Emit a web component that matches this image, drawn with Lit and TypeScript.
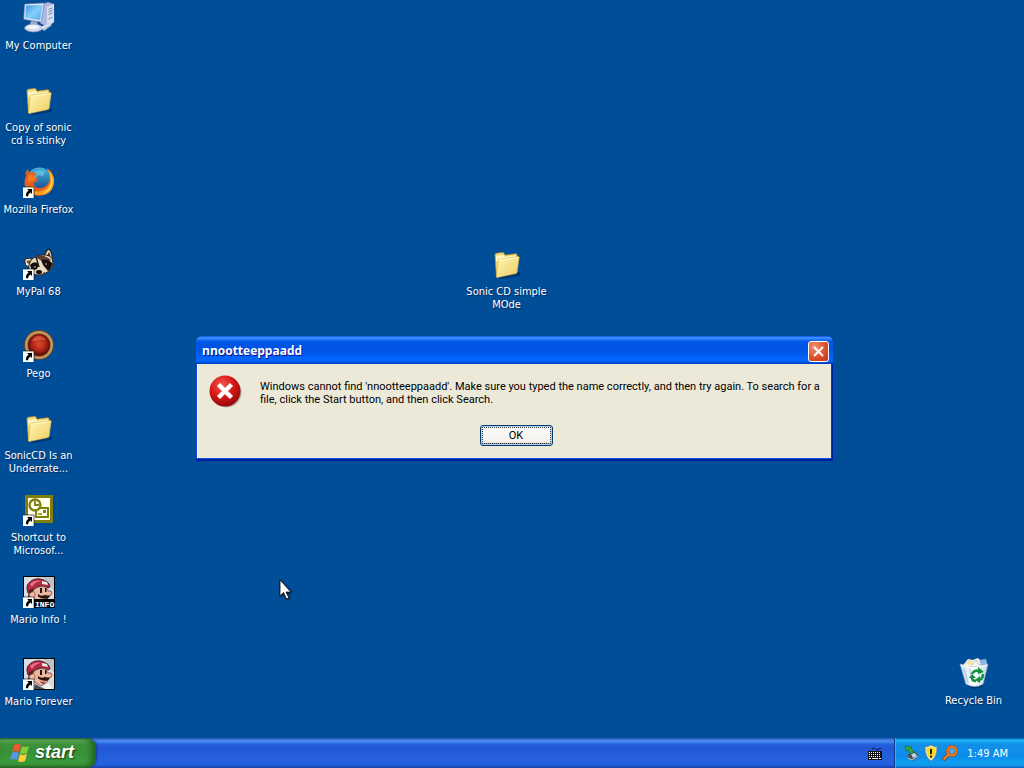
import { LitElement, html, css, svg } from "lit";
import { customElement, property } from "lit/decorators.js";

const folder = svg`
  <path d="M7 29 L28 24 L29 25 L29 28 L9 31z" fill="#00244f" opacity=".55"/>
  <path d="M4 7q0-1.500 1.500-1.700l6-.8q1-.1 1.500.8l1 2 10.500-1.500q1.500-.2 1.500 1.200v17L5.500 29z" fill="#f3d975" stroke="#c29a35" stroke-width=".7"/>
  <path d="M5 8l7.500-1.200 1.500 2L25 7.200v3L5 13z" fill="#fff6bd"/>
  <path d="M7.200 12.400q0-1 1-1.200L27 8.600q1.300-.2 1.200 1L26 24.500q-.1.900-1 1.100L6.500 29.500q-1 .1-1-.8z" fill="url(#fold)" stroke="#d5b04c" stroke-width=".5"/>
  <path d="M8 12.500l19-2.800" stroke="#fffbd8" stroke-width=".8"/>`;

const mario = svg`
  <rect width="32" height="32" fill="#000"/>
  <rect x="1" y="1" width="30" height="30" fill="#d9dce0"/>
  <path d="M20 1h11v14l-6-8z" fill="#bcc3cb"/>
  <path d="M4 13Q3 8 8 5q6-4 13-1 5 2 6 6l-1 2q-8-4-14 0l-3 5H5z" fill="#b52a45" stroke="#3c0d18" stroke-width=".8"/>
  <path d="M7 8q5-5 12-3-7 0-10 6z" fill="#e8738a"/>
  <path d="M19 5l5 1 1 3-6-1z" fill="#f2e8e4"/>
  <path d="M6 14l5-2 1 6-1 7-6-4z" fill="#4b2420"/>
  <path d="M11 13q6-4 12-2l2 4q4-1 4 2t-4 3l-1 4-6 4-8-5q-2-6 1-10z" fill="#eeb69c" stroke="#4a2018" stroke-width=".6"/>
  <path d="M9 16q3-1 3 3t-3 3-3-3 3-3z" fill="#f0bea6" stroke="#70332a" stroke-width=".6"/>
  <path d="M17 12h2v5h-2zM22 12h1.500v4H22z" fill="#161018"/>
  <path d="M15 18q3 3 7 1l5 1-2 2.500q-6 1-10-2z" fill="#2b1511"/>
  <path d="M17 23q3 2 5 0l-1 3-3-1z" fill="#a5303c"/>
  <path d="M12 26q7 4 10 5H11z" fill="#40505c"/>
  <path d="M20 28l6-3 4 6h-8z" fill="#edf1f0"/>`;

const art: Record<string, unknown> = {
  computer: svg`
    <path d="M17 3l8-3 6 2v18l-7 5-7-4z" fill="#aeb9df" stroke="#596a9f" stroke-width=".6"/>
    <path d="M24 5l7-3v18l-7 5z" fill="#d7def2"/>
    <path d="M25.500 7.500l4-1.600M25.500 10l4-1.600M25.500 12.500l4-1.600M25.500 17l4-1.600" stroke="#6475ac" stroke-width=".9"/>
    <path d="M2.500 2L20 1q1 0 1 1l-2.500 17q-.1 1-1 1L1.500 17.500q-1-.1-.8-1L1.500 3q0-1 1-1z" fill="#dce3f4" stroke="#6473ac" stroke-width=".6"/>
    <path d="M3 3.500L19.500 3 17.200 18 2.200 16z" fill="url(#screen)"/>
    <path d="M8 19l6 .8 1 4-8-1z" fill="#a7b2d8"/>
    <ellipse cx="10.500" cy="26" rx="9" ry="4" fill="#d1d8ec" stroke="#7d89b4" stroke-width=".6"/>
    <ellipse cx="10" cy="25" rx="6" ry="2" fill="#f3f5fc"/>
    <path d="M17 25l9-4 3 2-8 6z" fill="#bfc8e3"/>
    <path d="M19 26l7-3.500" stroke="#f7f8fd"/>`,
  folder,
  firefox: svg`
    <circle cx="16.500" cy="15" r="13.500" fill="url(#globe)"/>
    <path d="M11 6q6-3 11 0l-2 4-5-1-3 3z" fill="#72c7e8" opacity=".7"/>
    <path d="M2 8q1-3 3-5l1 4q4-2 8 1l-3 2q0 2 4 3-1 3-5 4 2 6 8 5 6-1 8-6 2-7-2-14 7 5 7 13-1 14-15 15Q3 29 1.500 18q0-6 2-9z" fill="#e4601b"/>
    <path d="M24 3q8 5 7 14-2 12-14 12Q7 29 4 21q6 6 14 4 7-2 9-9 1-7-3-13z" fill="#f89d20"/>
    <path d="M26 6q5 6 3 13-3 8-10 9 7-4 9-10 1-6-2-12z" fill="#ffe15b"/>
    <path d="M5 10q3-2 6 0l3 1-4 4-5 1z" fill="#f27b22"/>`,
  raccoon: svg`
    <path d="M20 9l5-8q5 2 4 13z" fill="#e9d8c0" stroke="#271c17" stroke-width="1.200"/>
    <path d="M24 8l2-4q2 4 1 8z" fill="#3a241a"/>
    <path d="M2 11q-1 7 4 8l5-4-4-5z" fill="#eee5d6" stroke="#2b1c17"/>
    <path d="M3.500 13q1 4 4 2l-1-3z" fill="#7d4e34"/>
    <path d="M6 17q2-9 13-10 10-1 11 7 0 6-4 9-8 6-16 3-5-3-4-9z" fill="#eadcc0" stroke="#33231c"/>
    <path d="M10 10q9-6 18 2l-6 3-8-5z" fill="#5b4030"/>
    <path d="M7 17q4-5 9-1l-2 5-5 2zM18 12q7-2 11 3 0 6-4 8l-5-6z" fill="#170f0e"/>
    <circle cx="12" cy="19" r=".8" fill="#e9dccb"/><circle cx="23" cy="16" r=".8" fill="#e9dccb"/>
    <path d="M13 9l3 10" stroke="#33231c" stroke-width="1.500"/>
    <ellipse cx="16" cy="24" rx="3" ry="2" fill="#100d0d"/>
    <path d="M14 27q5 1 8-3" fill="none" stroke="#6f4830"/>`,
  pego: svg`
    <circle cx="16" cy="15" r="15" fill="#5c4632"/>
    <circle cx="16" cy="15" r="14" fill="#c6965c"/>
    <circle cx="16" cy="15" r="11.500" fill="#765036"/>
    <circle cx="16" cy="15" r="11" fill="url(#ball)"/>
    <path d="M9 11q2-5 7-5 5 0 7 5-3-2-7-1-4 2-7 1z" fill="#e3674c" opacity=".65"/>`,
  outlook: svg`
    <rect x="2" y="1" width="28" height="28" fill="#7f8009"/>
    <rect x="5" y="4" width="22" height="22" fill="#fffef0"/>
    <rect x="13" y="14" width="12" height="9" fill="#fffef0" stroke="#7f8009" stroke-width="2"/>
    <rect x="20" y="16" width="3" height="3" fill="#7f8009"/>
    <path d="M15 20h4" stroke="#7f8009" stroke-width="1.500"/>
    <circle cx="12" cy="11" r="5.500" fill="#fffef0" stroke="#7f8009" stroke-width="2.300"/>
    <path d="M12 7v4h4" fill="none" stroke="#7f8009" stroke-width="1.800"/>`,
  mario,
  info: svg`${mario}
    <rect x="11" y="23" width="21" height="9" fill="#000"/>
    <text x="12" y="30.500" font-family="Liberation Mono, monospace" font-weight="700" font-size="8" fill="#fff">INFO</text>`,
  bin: svg`
    <path d="M10 29l14-1 2 2-11 2z" fill="#001f4e" opacity=".5"/>
    <path d="M5 8l5-6 5 1 5-2 3 3 5-1 1 6-4 4-17-1z" fill="#f6f3ea"/>
    <path d="M7 7l5-4 2 5 4-5 3 5 5-2" fill="none" stroke="#c7c7d7"/>
    <path d="M21 3l7-1 1 5-5 3z" fill="#8fb6e5"/>
    <path d="M10 4l4-1 1 4-5 1z" fill="#f2e2a5"/>
    <path d="M2 7q13 6 28 0L25 27q-8 5-17 0z" fill="url(#glass)" stroke="#9ab6d1" stroke-width=".7"/>
    <path d="M3 8q12 5 26 0" fill="none" stroke="#fff" stroke-width="1.200"/>
    <path d="M6 12l4 14M12 12l1 9" stroke="#b4b9da" stroke-width="1.500" opacity=".7"/>
    <g fill="none" stroke="#15903a" stroke-width="2.500"><path d="M14 17q2-4 6-3l3 1M25 17q0 5-4 6M18 24q-4 0-4-3"/></g>
    <path d="M20 10l6 5-6 2zM22 19l-5 4 5 3zM11 21l3-4 4 4z" fill="#15903a"/>`,
};

@customElement("desktop-icon")
class DesktopIcon extends LitElement {
  @property() label = "";
  @property() icon = "folder";
  @property({ type: Boolean }) shortcut = false;

  static styles = css`
    :host { display: block; width: 77px; }
    .item {
      display: flex; flex-direction: column; align-items: center; gap: 5px;
      color: #fff; text-decoration: none; text-align: center;
      font: 11px/13px "DejaVu Sans Condensed", "DejaVu Sans", sans-serif;
      text-shadow: 1px 1px 1px #002b5c; cursor: default;
    }
    .picture { display: block; }
    .label { white-space: pre; }
  `;

  render() {
    return html`<a class="item" href="#">
      <svg class="picture" width="32" height="32" viewBox="0 0 32 32" aria-hidden="true">
        <defs>
          <linearGradient id="fold" x2="1" y2="1"><stop stop-color="#fff8b6"/><stop offset="1" stop-color="#eecb60"/></linearGradient>
          <linearGradient id="screen" x2="1" y2="1"><stop stop-color="#3b98e5"/><stop offset=".5" stop-color="#84cffb"/><stop offset="1" stop-color="#50acf0"/></linearGradient>
          <linearGradient id="globe" x2="0" y2="1"><stop stop-color="#43b4df"/><stop offset="1" stop-color="#143a80"/></linearGradient>
          <linearGradient id="glass" x2="1"><stop stop-color="#c3e0ef"/><stop offset=".45" stop-color="#fafdfd"/><stop offset="1" stop-color="#bfdce5"/></linearGradient>
          <radialGradient id="ball" cx=".5" cy=".45"><stop stop-color="#dc4930"/><stop offset=".6" stop-color="#b32516"/><stop offset="1" stop-color="#621009"/></radialGradient>
        </defs>
        ${art[this.icon]}
        ${this.shortcut
          ? svg`<rect x="0" y="21" width="11" height="11" fill="#fff"/>
              <path d="M0 21h11v11" fill="none" stroke="#000" stroke-width=".6"/>
              <path d="M4 23h5v5l-1.700-1.600Q5 28 5 30.500L3 30q-.5-3 2.600-5.400z" fill="#000"/>`
          : ""}
      </svg>
      <span class="label">${this.label}</span>
    </a>`;
  }
}

@customElement("message-dialog")
class MessageDialog extends LitElement {
  static styles = css`
    :host { display: block; font: 11px/13px Roboto, "Liberation Sans", sans-serif; color: #000; }
    .frame {
      border-radius: 6px 6px 0 0; padding: 0 2px 3px 1px;
      background: linear-gradient(90deg, #0a48d8, #0855dd 3px, #0855dd calc(100% - 3px), #0022b4);
      box-shadow: inset -1px -2px #001ea0;
    }
    .title {
      display: flex; align-items: center; justify-content: space-between;
      height: 28px; margin: 0 -2px 0 -1px; padding: 2px 4px 0 6px; box-sizing: border-box;
      border-radius: 6px 6px 0 0; color: #fff;
      font: 700 12px/16px "Open Sans", "Noto Sans", sans-serif;
      text-shadow: 1px 1px #0f1089;
      background: linear-gradient(#0a4ce0 0, #3d95ff 6%, #2a7bf8 11%, #0359e8 20%, #0054e3 30%, #0055e8 55%, #0365fd 80%, #0366ff 90%, #0046d2 96%, #0040c4);
    }
    .heading { margin: 0; font: inherit; }
    .close {
      display: grid; place-items: center; width: 21px; height: 21px; padding: 0;
      border: 1px solid #fff; border-radius: 3px;
      background: radial-gradient(circle at 30% 25%, #ef9277, #e0502b 55%, #c23312);
    }
    .body { background: #ece9d8; padding: 11px 8px 12px 11px; display: grid; gap: 17px; border-left: 1px solid #f7f7f5; }
    .row { display: flex; gap: 18px; }
    .row svg { flex: none; }
    .message { margin: 0; padding-top: 5px; }
    .ok {
      justify-self: center; width: 73px; height: 21px; padding: 1px;
      border: 1px solid #003c74; border-radius: 3px; font: inherit; color: #000;
      background: linear-gradient(#fdfdfc, #f3f2ee 80%, #d9d5ca);
      box-shadow: inset 0 0 0 1px #b6cdf2, inset 0 -2px #89a9dc;
      display: grid;
    }
    .focus { border: 1px dotted #333; display: grid; place-items: center; line-height: 15px; }
  `;

  render() {
    return html`<div class="frame" role="alertdialog" aria-labelledby="t" aria-describedby="m">
      <div class="title">
        <h1 class="heading" id="t">nnootteeppaadd</h1>
        <button class="close" aria-label="Close">
          <svg width="13" height="13" viewBox="0 0 13 13"><path d="M2 2l9 9M11 2l-9 9" stroke="#fff" stroke-width="2"/></svg>
        </button>
      </div>
      <div class="body">
        <div class="row">
          <svg width="33" height="33" viewBox="0 0 33 33" aria-hidden="true">
            <defs><radialGradient id="e" cx=".4" cy=".3" r=".75"><stop stop-color="#f45b50"/><stop offset=".5" stop-color="#d71916"/><stop offset="1" stop-color="#8e0508"/></radialGradient></defs>
            <circle cx="17.500" cy="17.500" r="15" fill="#777267" opacity=".5"/>
            <circle cx="16" cy="16" r="15.500" fill="url(#e)"/>
            <path d="M9.500 9.500l13 13M22.500 9.500l-13 13" stroke="#fff" stroke-width="4.400"/>
          </svg>
          <p class="message" id="m">Windows cannot find 'nnootteeppaadd'. Make sure you typed the name correctly, and then try again. To search for a file, click the Start button, and then click Search.</p>
        </div>
        <button class="ok"><span class="focus">OK</span></button>
      </div>
    </div>`;
  }
}

@customElement("task-bar")
class TaskBar extends LitElement {
  static styles = css`
    :host { display: block; }
    .bar {
      display: flex; height: 30px; color: #fff;
      background: linear-gradient(#1f4fb0 0, #3165c4 3%, #3d82ea 7%, #4a8cee 11%, #3378e4 16%, #265fdc 22%, #2258d5 32%, #245ddb 54%, #2562df 86%, #2158d4 92%, #1941a5 100%);
    }
    .start {
      display: flex; align-items: center; gap: 5px; width: 96px; padding: 0 0 2px 10px;
      border: 0; border-radius: 0 9px 9px 0; color: #fff;
      font: italic 700 18px/24px "Liberation Sans", Arial, sans-serif;
      text-shadow: 1px 1px 2px #12380f;
      background: linear-gradient(#2a6a2b 0, #6cb368 7%, #4fa34d 13%, #3c923b 22%, #378f37 45%, #3b9b3b 75%, #3c9a3a 88%, #2b6b2a);
      box-shadow: inset -4px 0 6px #1d6022, 1px 0 2px #173b94;
    }
    .keys { margin: 9px 12px 0 auto; }
    .tray {
      display: flex; align-items: center; gap: 3px; padding: 0 16px 0 9px;
      border-left: 1px solid #103d8d; box-shadow: inset 1px 0 #20b8f8;
      font: 11px/13px "DejaVu Sans Condensed", "DejaVu Sans", sans-serif;
      background: linear-gradient(#0c59b9 0, #139ee9 5%, #27b4f4 10%, #139beb 15%, #1290e8 22%, #0d8dea 63%, #0d9ff1 81%, #119be9 90%, #137ed7 96%, #095bc9);
    }
    .clock { margin-left: 6px; }
  `;

  render() {
    return html`<div class="bar">
      <button class="start">
        <svg width="20" height="19" viewBox="0 0 20 19" aria-hidden="true">
          <path d="M4 2q4-2 7 0L9 9Q5 7 2 9z" fill="#f0562c"/>
          <path d="M12 3q3 2 7 0l-2 7q-4 2-7 0z" fill="#85cc3d"/>
          <path d="M2 10q3-2 7 0l-2 7q-4-2-7 0z" fill="#5c91ec"/>
          <path d="M10 11q3 2 7 0l-2 7q-4 2-7 0z" fill="#fbd13c"/>
        </svg>
        <span>start</span>
      </button>
      <svg class="keys" width="14" height="14" viewBox="0 0 14 14" aria-hidden="true">
        <path d="M4 1.500h3M8 2.500h3M11 1.500h2" fill="none" stroke="#0a1a50"/>
        <rect x="0" y="4" width="14" height="9" fill="#111"/>
        <path d="M1 5.500h12M1 7.500h12M1 9.500h12" stroke="#fff" stroke-dasharray="1 1"/>
        <path d="M1 11.500h2M4 11.500h6M11 11.500h2" stroke="#fff"/>
      </svg>
      <div class="tray">
        <svg width="16" height="16" viewBox="0 0 16 16" aria-hidden="true">
          <path d="M4 9l7-3 4 5-6 5-5-3z" fill="#49515c"/><path d="M7 9l4-1 2 3-4 2z" fill="#b9d9ea"/>
          <path d="M1 1l7 1-1 1 3 4-3 2-3-4-2 1z" fill="#35a83b" stroke="#136c26" stroke-width=".6"/>
          <path d="M4 13l4 2 6-4" fill="none" stroke="#c8cdd2"/>
        </svg>
        <svg width="16" height="16" viewBox="0 0 16 16" aria-hidden="true">
          <path d="M8 0q3 2 6 2 0 10-6 14Q2 12 2 2q3 0 6-2z" fill="#e9eaec" stroke="#807753" stroke-width=".6"/>
          <path d="M8 1.500q2 1.500 4.800 1.800Q12.500 11 8 14.500 3.500 11 3.200 3.300 6 3 8 1.500z" fill="#fbd91b"/>
          <path d="M7 4h2v5H7zM7 10.500h2v2H7z" fill="#231c08"/>
        </svg>
        <svg width="16" height="16" viewBox="0 0 16 16" aria-hidden="true">
          <path d="M7 9l-6 6" stroke="#7b3b17" stroke-width="3.500"/>
          <circle cx="10" cy="6" r="4.500" fill="#5ba7d7" stroke="#8b451a" stroke-width="3"/>
          <path d="M7 9l-5.500 5.500" stroke="#f28128" stroke-width="2.200"/>
          <circle cx="10" cy="6" r="4.500" fill="none" stroke="#ee7b24" stroke-width="2"/>
        </svg>
        <span class="clock">1:49 AM</span>
      </div>
    </div>`;
  }
}

const shortcuts = [
  { label: "My Computer", icon: "computer", shortcut: false },
  { label: "Copy of sonic\ncd is stinky", icon: "folder", shortcut: false },
  { label: "Mozilla Firefox", icon: "firefox", shortcut: true },
  { label: "MyPal 68", icon: "raccoon", shortcut: true },
  { label: "Pego", icon: "pego", shortcut: true },
  { label: "SonicCD Is an\nUnderrate...", icon: "folder", shortcut: false },
  { label: "Shortcut to\nMicrosof...", icon: "outlook", shortcut: true },
  { label: "Mario Info !", icon: "info", shortcut: true },
  { label: "Mario Forever", icon: "mario", shortcut: true },
];

@customElement("app-root")
class AppRoot extends LitElement {
  static styles = css`
    :host { display: flex; flex-direction: column; height: 100vh; overflow: hidden; background: #004e98; }
    .desktop { flex: 1; min-height: 0; position: relative; }
    .column { display: grid; grid-auto-rows: 82px; justify-content: start; padding-top: 2px; }
    .sonic { position: absolute; left: 468px; top: 248px; }
    .bin { position: absolute; right: 12px; bottom: 31px; }
    .dialog { position: absolute; left: 196px; top: 336px; width: 637px; }
    .pointer { position: absolute; left: 279px; top: 579px; filter: drop-shadow(1px 1px 1px #00254c); }
    .taskbar { flex: none; }
  `;

  render() {
    return html`
      <main class="desktop">
        <div class="column">
          ${shortcuts.map((s) => html`<desktop-icon .label=${s.label} .icon=${s.icon} .shortcut=${s.shortcut}></desktop-icon>`)}
        </div>
        <desktop-icon class="sonic" .label=${"Sonic CD simple\nMOde"}></desktop-icon>
        <desktop-icon class="bin" label="Recycle Bin" icon="bin"></desktop-icon>
        <message-dialog class="dialog"></message-dialog>
        <svg class="pointer" width="13" height="22" viewBox="0 0 13 22" aria-hidden="true">
          <path d="M1 1v16l3.500-3.500L7.500 20l2.500-1-3-6h5z" fill="#fff" stroke="#000" stroke-width=".8"/>
        </svg>
      </main>
      <task-bar class="taskbar"></task-bar>
    `;
  }
}
